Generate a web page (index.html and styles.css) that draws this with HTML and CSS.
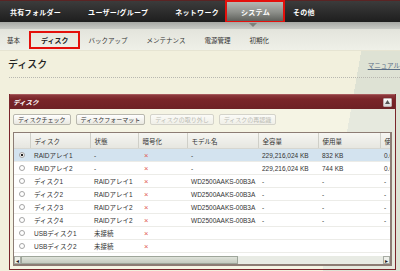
FILE: index.html
```html
<!DOCTYPE html>
<html lang="ja">
<head>
    <meta charset="UTF-8">
    <meta name="viewport" content="width=device-width, initial-scale=1.0">
    <title>ディスク</title>
    <link rel="stylesheet" href="styles.css">
</head>
<body>
    <header class="topnav">
        <a class="nav-item">共有フォルダー</a>
        <a class="nav-item">ユーザー/グループ</a>
        <a class="nav-item">ネットワーク</a>
        <a class="nav-item active">システム</a>
        <a class="nav-item">その他</a>
    </header>
    <div class="band">
        <span class="pointer"></span>
    </div>
    <nav class="subnav">
        <a class="sub-item">基本</a>
        <a class="sub-item active">ディスク</a>
        <a class="sub-item">バックアップ</a>
        <a class="sub-item">メンテナンス</a>
        <a class="sub-item">電源管理</a>
        <a class="sub-item">初期化</a>
    </nav>

    <main class="content">
        <div class="title-row">
            <h1>ディスク</h1>
            <a class="manual">マニュアル</a>
        </div>

        <section class="panel">
            <div class="panel-head">
                <span class="panel-title">ディスク</span>
                <span class="collapse">
                    <svg width="5" height="4" viewBox="0 0 5 4"><path d="M0 4 L2.5 0 L5 4 Z" fill="#555"/></svg>
                </span>
            </div>
            <div class="panel-body">
                <div class="toolbar">
                    <button class="btn">ディスクチェック</button>
                    <button class="btn">ディスクフォーマット</button>
                    <button class="btn" disabled>ディスクの取り外し</button>
                    <button class="btn" disabled>ディスクの再認識</button>
                </div>

                <div class="grid">
                    <div class="grid-scroll">
                        <table>
                            <colgroup>
                                <col class="c-radio">
                                <col class="c-disk">
                                <col class="c-state">
                                <col class="c-enc">
                                <col class="c-model">
                                <col class="c-total">
                                <col class="c-used">
                                <col class="c-rate">
                            </colgroup>
                            <thead>
                                <tr>
                                    <th></th>
                                    <th>ディスク</th>
                                    <th>状態</th>
                                    <th>暗号化</th>
                                    <th>モデル名</th>
                                    <th>全容量</th>
                                    <th>使用量</th>
                                    <th>使用率</th>
                                </tr>
                            </thead>
                            <tbody>
                                <tr class="selected">
                                    <td><span class="radio checked"></span></td>
                                    <td>RAIDアレイ1</td>
                                    <td>-</td>
                                    <td class="x">×</td>
                                    <td>-</td>
                                    <td>229,216,024 KB</td>
                                    <td>832 KB</td>
                                    <td>0.0%</td>
                                </tr>
                                <tr>
                                    <td><span class="radio"></span></td>
                                    <td>RAIDアレイ2</td>
                                    <td>-</td>
                                    <td class="x">×</td>
                                    <td>-</td>
                                    <td>229,216,024 KB</td>
                                    <td>744 KB</td>
                                    <td>0.0%</td>
                                </tr>
                                <tr>
                                    <td><span class="radio"></span></td>
                                    <td>ディスク1</td>
                                    <td>RAIDアレイ1</td>
                                    <td class="x">×</td>
                                    <td>WD2500AAKS-00B3A</td>
                                    <td>-</td>
                                    <td>-</td>
                                    <td>-</td>
                                </tr>
                                <tr>
                                    <td><span class="radio"></span></td>
                                    <td>ディスク2</td>
                                    <td>RAIDアレイ1</td>
                                    <td class="x">×</td>
                                    <td>WD2500AAKS-00B3A</td>
                                    <td>-</td>
                                    <td>-</td>
                                    <td>-</td>
                                </tr>
                                <tr>
                                    <td><span class="radio"></span></td>
                                    <td>ディスク3</td>
                                    <td>RAIDアレイ2</td>
                                    <td class="x">×</td>
                                    <td>WD2500AAKS-00B3A</td>
                                    <td>-</td>
                                    <td>-</td>
                                    <td>-</td>
                                </tr>
                                <tr>
                                    <td><span class="radio"></span></td>
                                    <td>ディスク4</td>
                                    <td>RAIDアレイ2</td>
                                    <td class="x">×</td>
                                    <td>WD2500AAKS-00B3A</td>
                                    <td>-</td>
                                    <td>-</td>
                                    <td>-</td>
                                </tr>
                                <tr>
                                    <td><span class="radio"></span></td>
                                    <td>USBディスク1</td>
                                    <td>未接続</td>
                                    <td class="x">×</td>
                                    <td></td>
                                    <td></td>
                                    <td></td>
                                    <td></td>
                                </tr>
                                <tr>
                                    <td><span class="radio"></span></td>
                                    <td>USBディスク2</td>
                                    <td>未接続</td>
                                    <td class="x">×</td>
                                    <td></td>
                                    <td></td>
                                    <td></td>
                                    <td></td>
                                </tr>
                            </tbody>
                        </table>
                    </div>
                    <div class="hscroll">
                        <span class="arrow">◂</span>
                        <span class="thumb"></span>
                        <span class="track"></span>
                        <span class="arrow">▸</span>
                    </div>
                </div>
            </div>
        </section>
    </main>
</body>
</html>
```

FILE: styles.css
```css
html,
body {
    margin: 0;
    padding: 0;
    height: 100%;
    overflow: hidden;
    font-family: "Liberation Sans", "Noto Sans CJK JP", sans-serif;
    color: #333;
}

body {
    background: #f2f0dd;
}

a {
    cursor: pointer;
}

/* top navigation */

.topnav {
    display: flex;
    align-items: center;
    height: 21px;
    border-top: 1px solid #5a2424;
    background: linear-gradient(#3c3c3c, #1e1e1e);
    padding-left: 10px;
}

.nav-item {
    display: flex;
    align-items: center;
    height: 100%;
    margin-right: 27px;
    color: #fff;
    font-size: 7px;
    font-weight: bold;
    letter-spacing: 0.3px;
    white-space: nowrap;
}

.nav-item.active {
    box-sizing: border-box;
    height: 23px;
    margin: -1px 8px 0 -21px;
    padding: 0 14px;
    width: 60px;
    border: 2px solid #e4100c;
    background: linear-gradient(#b6b8b3, #8c8e89 55%, #5e605b);
    align-self: flex-start;
}

.band {
    position: relative;
    height: 7px;
    background: linear-gradient(#a6a8a4, #c9cbc6);
}

.pointer {
    position: absolute;
    left: 249px;
    top: 1px;
    width: 0;
    height: 0;
    border-left: 4px solid transparent;
    border-right: 4px solid transparent;
    border-top: 4px solid #7d7f7a;
}

.subnav {
    display: flex;
    align-items: center;
    height: 21px;
    background: linear-gradient(#e3e4dc, #eff0e8);
    padding-left: 7px;
    border-bottom: 1px solid #e6e4d2;
}

.sub-item {
    font-size: 6.5px;
    color: #333;
    margin-right: 19px;
    white-space: nowrap;
}

.sub-item.active {
    box-sizing: border-box;
    height: 18px;
    margin-left: -10px;
    margin-right: 9px;
    padding: 0 9px 0 10px;
    display: flex;
    align-items: center;
    border: 2px solid #e4100c;
    font-weight: bold;
    font-size: 7px;
    color: #222;
}

/* content */

.content {
    padding: 0 0 0 9px;
    background: linear-gradient(100deg, #f2f0dd 0 82%, #dee2d4 82%);
    height: 230px;
}

.title-row {
    display: flex;
    justify-content: space-between;
    align-items: flex-end;
    height: 26px;
    border-bottom: 1px dotted #b8b8b0;
}

.title-row h1 {
    margin: 0 0 6px -1px;
    font-size: 10px;
    font-weight: 500;
    color: #222;
}

.manual {
    margin-bottom: 7px;
    font-size: 6.5px;
    color: #5a6e86;
    text-decoration: underline;
    white-space: nowrap;
}

.panel {
    margin: 16px 4px 0 0;
    border: 1px solid #7a262b;
    border-top: none;
}

.panel-head {
    display: flex;
    align-items: center;
    justify-content: space-between;
    height: 14px;
    padding: 0 3px;
    background: linear-gradient(#8d3a3d, #7a2529 30%, #6e2125);
    border-top: 1px solid #a65a5c;
}

.panel-title {
    color: #fff;
    font-size: 6.5px;
    font-weight: bold;
    font-style: italic;
}

.collapse {
    display: flex;
    align-items: center;
    justify-content: center;
    width: 7px;
    height: 7px;
    border-radius: 1px;
    background: linear-gradient(#ffffff, #d8d8d8);
    border: 1px solid #c0b0b0;
}

.panel-body {
    padding: 5px 3px 3px;
    background: rgba(255, 255, 250, 0.25);
}

.toolbar {
    display: flex;
    gap: 5px;
    margin-bottom: 7px;
}

.btn {
    height: 11px;
    padding: 0 4px;
    border: 1px solid #b9b8ae;
    border-radius: 2px;
    background: linear-gradient(#ffffff, #e9e8e0);
    font-family: inherit;
    font-size: 6px;
    color: #333;
    line-height: 1;
}

.btn:disabled {
    color: #bcbcb4;
    border-color: #d4d3ca;
    background: linear-gradient(#fbfbf7, #f0efe8);
}

/* grid */

.grid {
    border: 1px solid #8c7c74;
    border-width: 1px 2px 2px 1px;
    background: #fff;
}

.grid-scroll {
    overflow: hidden;
    height: 123px;
}

table {
    border-collapse: collapse;
    table-layout: fixed;
    width: 420px;
    font-size: 6.5px;
}

.c-radio { width: 16px; }
.c-disk { width: 60px; }
.c-state { width: 48px; }
.c-enc { width: 49px; }
.c-model { width: 71px; }
.c-total { width: 60px; }
.c-used { width: 62px; }
.c-rate { width: 54px; }

th {
    height: 15px;
    padding: 0 0 0 4px;
    text-align: left;
    font-weight: normal;
    background: linear-gradient(#f6f6f2, #e6e6e0);
    border-right: 1px solid #cfcfc8;
    border-bottom: 1px solid #d6d6d0;
    white-space: nowrap;
    overflow: hidden;
}

td {
    height: 12px;
    padding: 0 0 0 4px;
    border-bottom: 1px solid #ecece8;
    white-space: nowrap;
    overflow: hidden;
}

td:first-child {
    padding-left: 5px;
}

tr.selected td {
    background: #d3e3ef;
}

.x {
    padding-left: 6px;
    color: #e0564e;
    font-size: 7.5px;
}

.radio {
    display: block;
    box-sizing: border-box;
    width: 6px;
    height: 6px;
    border: 1px solid #a4a4a4;
    border-radius: 50%;
    background: #fff;
}

.radio.checked {
    background: radial-gradient(circle, #222 0 1.3px, #fff 1.6px);
}

.hscroll {
    display: flex;
    height: 8px;
    background: #e8ebe4;
}

.arrow {
    display: flex;
    align-items: center;
    justify-content: center;
    width: 7px;
    font-size: 6px;
    color: #222;
    background: #eef0ea;
    border: 1px solid #a8aca4;
    box-sizing: border-box;
}

.thumb {
    width: 217px;
    box-sizing: border-box;
    border: 1px solid #9ea69a;
    background: linear-gradient(#dfe3da, #c5cbc0);
}

.track {
    flex: 1;
}
```
